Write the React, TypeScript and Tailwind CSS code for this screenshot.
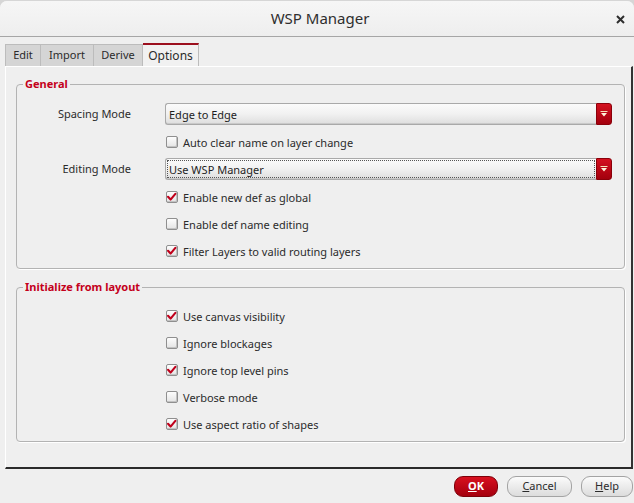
import React from "react";

function CheckBox({ checked }: { checked: boolean }) {
  return (
    <span className="flex w-[12px] h-[12px] shrink-0 border border-[#8f8f8f] rounded-[2px] bg-gradient-to-b from-[#fdfdfd] to-[#e4e4e4] shadow-[inset_-1px_-1px_0_#c2c2c2]">
      {checked && (
        <svg width="12" height="12" viewBox="0 0 12 12" className="-ml-[1px] -mt-[1px]">
          <path d="M2.2 5.8 L5 8.8 L10.2 2.6" fill="none" stroke="#c0001b" strokeWidth="2.3" strokeLinecap="round" strokeLinejoin="round" />
        </svg>
      )}
    </span>
  );
}

function CheckRow({ checked, label, pl }: { checked: boolean; label: string; pl: string }) {
  return (
    <div className={`flex items-center h-[22px] gap-[5px] ${pl}`}>
      <CheckBox checked={checked} />
      <span className="text-[11px] text-[#2b2b2b] leading-none">{label}</span>
    </div>
  );
}

function Combo({ value, focus }: { value: string; focus?: boolean }) {
  return (
    <div className="flex h-[22px] w-[447px]">
      <div className="flex-1 flex items-center border border-[#a9a9a9] border-r-0 rounded-l-[3px] bg-gradient-to-b from-[#fbfbfb] via-[#f1f1f1] to-[#dedede] shadow-[inset_0_-1px_0_#c9c9c9] px-[1px]">
        <div className={`flex-1 h-[18px] flex items-center pl-[1px] ${focus ? "border border-dotted border-[#555]" : "border border-transparent"}`}>
          <span className="text-[11px] text-[#1e1e1e] leading-none">{value}</span>
        </div>
      </div>
      <div className="w-[16px] flex items-center justify-center rounded-r-[3px] bg-gradient-to-b from-[#d4111f] to-[#a3000d] border border-[#8a000a]">
        <svg width="8" height="6" viewBox="0 0 8 6">
          <rect x="0.5" y="0" width="7" height="1" fill="#f4e3b8" />
          <path d="M1 2 L7 2 L4 5.5 Z" fill="#fff5dc" />
        </svg>
      </div>
    </div>
  );
}

function Group({ title, h, children }: { title: string; h: string; children: React.ReactNode }) {
  return (
    <div className={`relative ${h} border border-[#b3b3b3] rounded-[4px] shadow-[1px_1px_0_#ffffff]`}>
      <span className="absolute -top-[8px] left-[6px] px-[2px] bg-[#efefef] text-[11px] leading-[14px] font-bold text-[#c4001b]">
        {title}
      </span>
      {children}
    </div>
  );
}

function Btn({ children, primary, w }: { children: React.ReactNode; primary?: boolean; w: string }) {
  return primary ? (
    <div className={`${w} h-[21px] flex items-center justify-center rounded-[9px] border border-[#7d0009] bg-gradient-to-b from-[#d8101f] to-[#a5000e] text-white font-bold text-[11px]`}>
      {children}
    </div>
  ) : (
    <div className={`${w} h-[21px] flex items-center justify-center rounded-[9px] border border-[#a3a3a3] bg-gradient-to-b from-[#fbfbfb] to-[#dcdcdc] text-[#2b2b2b] text-[11px]`}>
      {children}
    </div>
  );
}

export default function App() {
  return (
    <div className="w-[634px] h-[503px] bg-[#d6d6d6] font-['Noto_Sans',sans-serif] overflow-hidden flex flex-col">
      <div className="h-[1px]" />
      <div className="flex-1 flex flex-col bg-[#efefef] rounded-t-[7px]">
        {/* title bar */}
        <div className="h-[36px] flex items-center justify-center relative bg-gradient-to-b from-[#f6f6f6] to-[#eeeeee] border-b border-[#a6a6a6] rounded-t-[7px]">
          <span className="text-[15px] text-[#2e2e2e] pl-[6px]">WSP Manager</span>
          <svg className="absolute right-[9px] top-[14px]" width="9" height="9" viewBox="0 0 9 9">
            <path d="M1 1 L8 8 M8 1 L1 8" stroke="#2e2e2e" strokeWidth="2" />
          </svg>
        </div>

        {/* tabs */}
        <div className="flex pl-[5px] pt-[6px] h-[29px] items-end">
          <div className="w-[36px] h-[22px] flex items-center justify-center bg-[#d5d5d5] border border-[#bcbcbc] border-b-0 text-[11px] text-[#2b2b2b]">Edit</div>
          <div className="w-[53px] h-[22px] flex items-center justify-center bg-[#d5d5d5] border border-[#bcbcbc] border-l-0 border-b-0 text-[11px] text-[#2b2b2b]">Import</div>
          <div className="w-[49px] h-[22px] flex items-center justify-center bg-[#d5d5d5] border border-[#bcbcbc] border-l-0 border-b-0 text-[11px] text-[#2b2b2b]">Derive</div>
          <div className="w-[56px] h-[23px] flex items-center justify-center bg-[#f1f1f1] border-t-2 border-t-[#9c0f1e] border-r border-r-[#bcbcbc] text-[12px] text-[#2b2b2b]">Options</div>
        </div>

        {/* panel */}
        <div className="ml-[5px] mr-[1px] h-[403px] border-l border-t border-l-white border-t-white border-r-2 border-b-2 border-r-[#333] border-b-[#2a2a2a] pl-[10px] pr-[6px] pt-[17px] flex flex-col">
          <Group title="General" h="h-[185px]">
            <div className="flex flex-col pt-[18px]">
              <div className="flex items-center h-[22px]">
                <span className="w-[114px] text-right text-[11px] text-[#2b2b2b]">Spacing Mode</span>
                <div className="ml-[34px]"><Combo value="Edge to Edge" /></div>
              </div>
              <div className="mt-[6px]"><CheckRow checked={false} label="Auto clear name on layer change" pl="pl-[149px]" /></div>
              <div className="flex items-center h-[22px] mt-[5px]">
                <span className="w-[114px] text-right text-[11px] text-[#2b2b2b]">Editing Mode</span>
                <div className="ml-[34px]"><Combo value="Use WSP Manager" focus /></div>
              </div>
              <div className="mt-[6px]"><CheckRow checked label="Enable new def as global" pl="pl-[149px]" /></div>
              <div className="mt-[5px]"><CheckRow checked={false} label="Enable def name editing" pl="pl-[149px]" /></div>
              <div className="mt-[5px]"><CheckRow checked label="Filter Layers to valid routing layers" pl="pl-[149px]" /></div>
            </div>
          </Group>
          <div className="h-[18px]" />
          <Group title="Initialize from layout" h="h-[155px]">
            <div className="flex flex-col gap-[5px] pt-[17px]">
              <CheckRow checked label="Use canvas visibility" pl="pl-[149px]" />
              <CheckRow checked={false} label="Ignore blockages" pl="pl-[149px]" />
              <CheckRow checked label="Ignore top level pins" pl="pl-[149px]" />
              <CheckRow checked={false} label="Verbose mode" pl="pl-[149px]" />
              <CheckRow checked label="Use aspect ratio of shapes" pl="pl-[149px]" />
            </div>
          </Group>
        </div>

        {/* buttons */}
        <div className="flex justify-end pr-[1px] pt-[7px] gap-[9px]">
          <Btn primary w="w-[44px]"><span><span className="underline">O</span>K</span></Btn>
          <Btn w="w-[65px]"><span><span className="underline">C</span>ancel</span></Btn>
          <Btn w="w-[52px]"><span><span className="underline">H</span>elp</span></Btn>
        </div>
      </div>
    </div>
  );
}
